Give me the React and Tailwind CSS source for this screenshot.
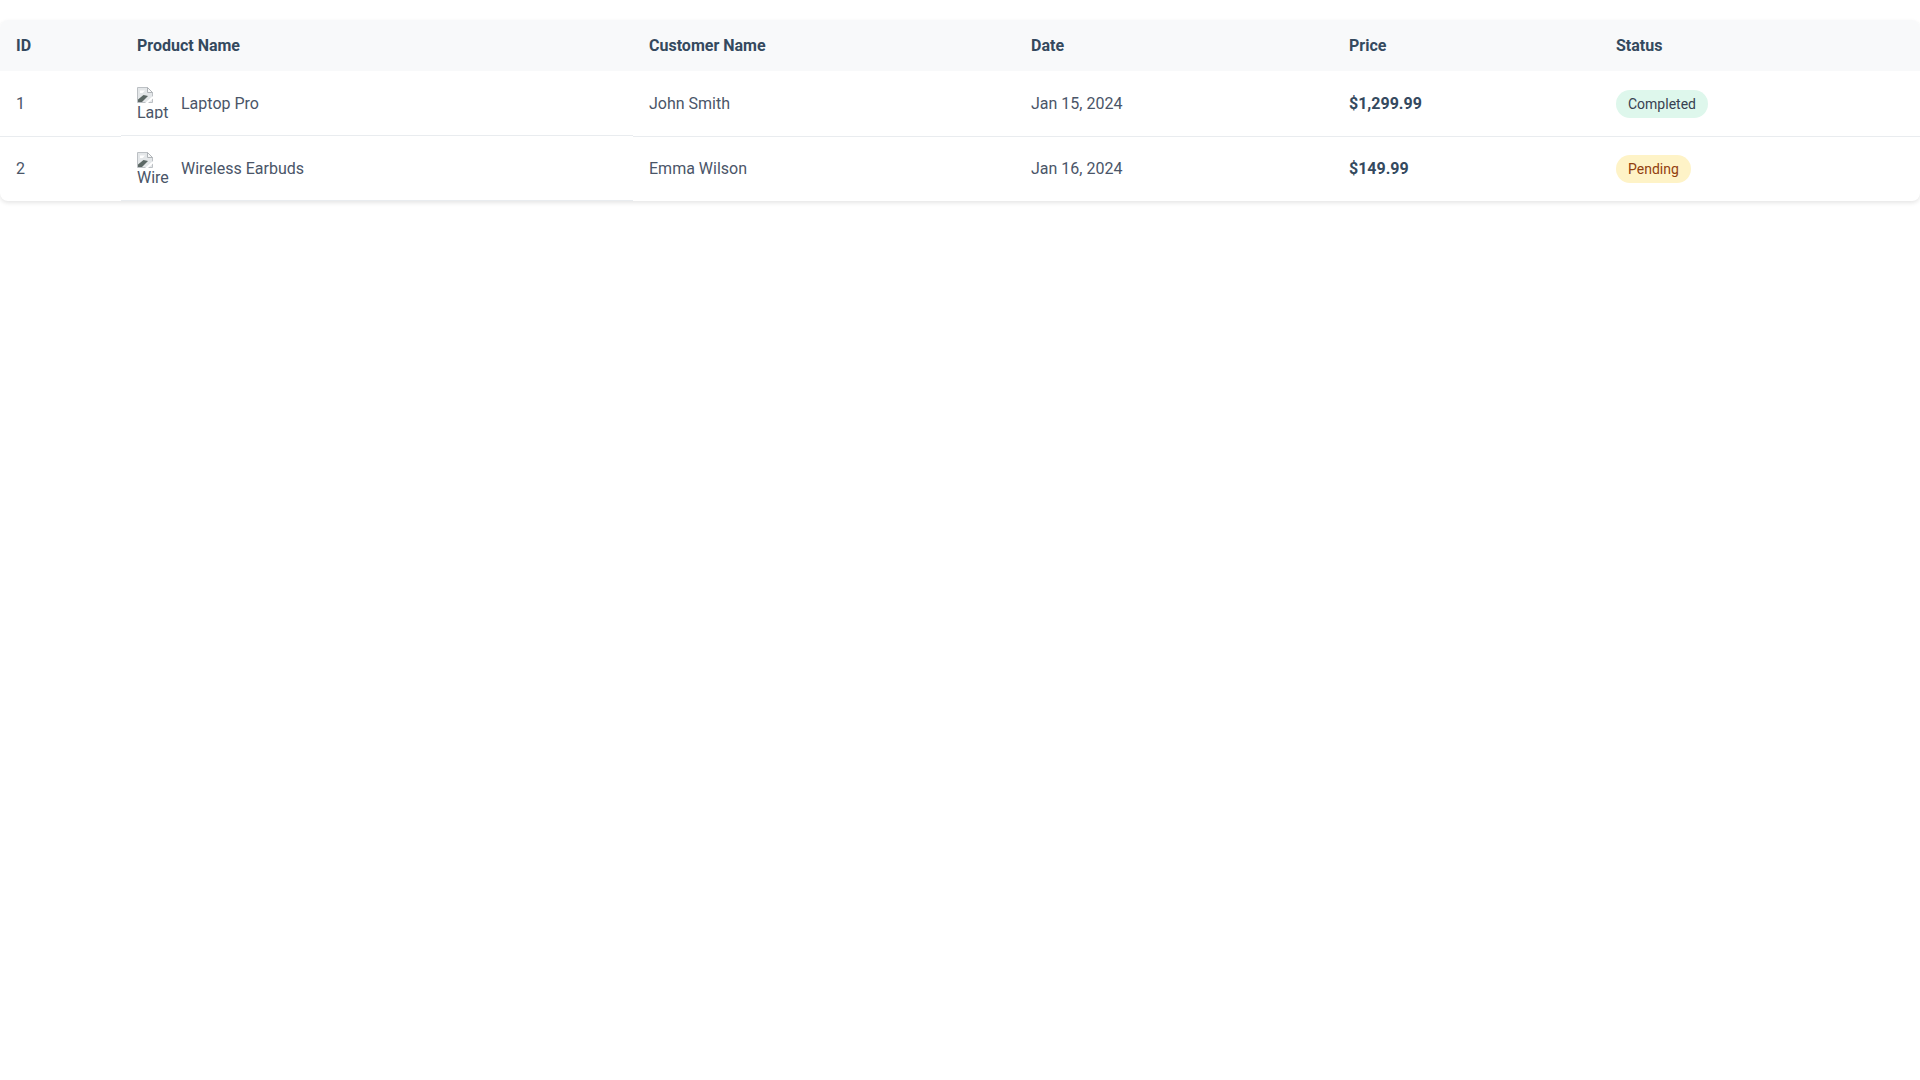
import React from "react";

const rows = [
  { id: 1, product: "Laptop Pro", alt: "Lapt", customer: "John Smith", date: "Jan 15, 2024", price: "$1,299.99", status: "Completed", badge: "bg-[#def7ec] text-[#374151]", height: "h-[66px]", productCell: "h-[65px] pt-px" },
  { id: 2, product: "Wireless Earbuds", alt: "Wire", customer: "Emma Wilson", date: "Jan 16, 2024", price: "$149.99", status: "Pending", badge: "bg-[#fef3c7] text-[#92400e]", height: "h-[64px]", productCell: "h-[64px]" },
];

function BrokenImage({ alt }) {
  return (
    <div className="w-8 h-8 overflow-hidden shrink-0 leading-[19px] text-[16px] -translate-y-px">
      <svg width="16" height="16" viewBox="0 0 16 16" className="block">
        <path d="M0.5 0.5H10.5L15.5 5.5V15.5H0.5Z" fill="#e4e7e9" stroke="#bcc0c4" strokeWidth="1" />
        <path d="M10.5 0.5V5.5H15.5Z" fill="#f7f8f8" stroke="#b0b4b8" strokeWidth="1" />
        <path d="M3 3.5H8L5.5 6H3Z" fill="#fff" />
        <path d="M1 15V12.5L6.5 8L11 9L5 15Z" fill="#5c6865" />
        <path d="M8 16L16 9V11.5L11 16Z" fill="#fff" />
      </svg>
      <div>{alt}</div>
    </div>
  );
}

export default function App() {
  return (
    <div className="w-full min-h-[1080px] bg-white font-['Roboto',sans-serif] text-[16px] pt-5">
      <div className="rounded-lg overflow-hidden shadow-[0_2px_4px_rgba(0,0,0,0.1)] bg-white">
        <div className="grid grid-cols-[121px_512px_382px_318px_267px_1fr] h-[51px] bg-[#f8f9fa] items-center font-bold text-[#34495e]">
          <div className="pl-4">ID</div>
          <div className="pl-4">Product Name</div>
          <div className="pl-4">Customer Name</div>
          <div className="pl-4">Date</div>
          <div className="pl-4">Price</div>
          <div className="pl-4">Status</div>
        </div>
        {rows.map((r) => (
          <div key={r.id} className={"grid grid-cols-[121px_512px_382px_318px_267px_1fr] items-start text-[#4a5568] " + r.height}>
            <div className={"pl-4 flex items-center border-[#e9ecef] " + r.height + (r.id === 1 ? " border-b" : "")}>{r.id}</div>
            <div className={"pl-4 flex items-center gap-3 border-b border-[#e9ecef] " + r.productCell}>
              <BrokenImage alt={r.alt} />
              <span>{r.product}</span>
            </div>
            <div className={"pl-4 flex items-center border-[#e9ecef] " + r.height + (r.id === 1 ? " border-b" : "")}>{r.customer}</div>
            <div className={"pl-4 flex items-center border-[#e9ecef] " + r.height + (r.id === 1 ? " border-b" : "")}>{r.date}</div>
            <div className={"pl-4 flex items-center font-bold text-[#34495e] border-[#e9ecef] " + r.height + (r.id === 1 ? " border-b" : "")}>{r.price}</div>
            <div className={"pl-4 flex items-center border-[#e9ecef] " + r.height + (r.id === 1 ? " border-b" : "")}>
              <span className={"inline-block px-3 py-1 rounded-full text-[14px] leading-5 " + r.badge}>{r.status}</span>
            </div>
          </div>
        ))}
      </div>
    </div>
  );
}
